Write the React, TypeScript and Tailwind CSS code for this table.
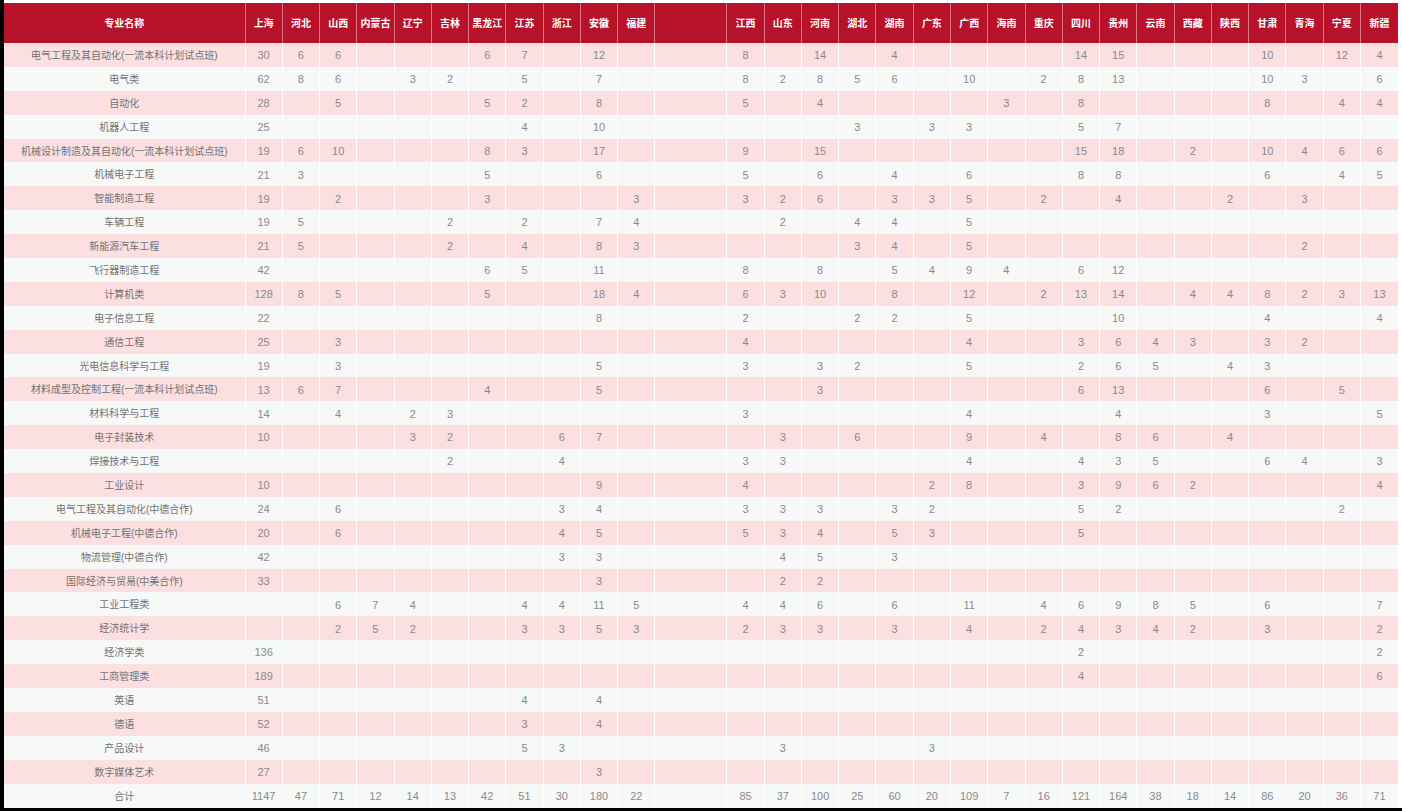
import React from "react";

const LEFT = ["上海", "河北", "山西", "内蒙古", "辽宁", "吉林", "黑龙江", "江苏", "浙江", "安徽", "福建"];
const RIGHT = ["江西", "山东", "河南", "湖北", "湖南", "广东", "广西", "海南", "重庆", "四川", "贵州", "云南", "西藏", "陕西", "甘肃", "青海", "宁夏", "新疆"];

type Major = { name: string; v: Record<string, number> };

const majors: Major[] = [
  { name: "电气工程及其自动化(一流本科计划试点班)", v: { 上海: 30, 河北: 6, 山西: 6, 黑龙江: 6, 江苏: 7, 安徽: 12, 江西: 8, 河南: 14, 湖南: 4, 四川: 14, 贵州: 15, 甘肃: 10, 宁夏: 12, 新疆: 4 } },
  { name: "电气类", v: { 上海: 62, 河北: 8, 山西: 6, 辽宁: 3, 吉林: 2, 江苏: 5, 安徽: 7, 江西: 8, 山东: 2, 河南: 8, 湖北: 5, 湖南: 6, 广西: 10, 重庆: 2, 四川: 8, 贵州: 13, 甘肃: 10, 青海: 3, 新疆: 6 } },
  { name: "自动化", v: { 上海: 28, 山西: 5, 黑龙江: 5, 江苏: 2, 安徽: 8, 江西: 5, 河南: 4, 海南: 3, 四川: 8, 甘肃: 8, 宁夏: 4, 新疆: 4 } },
  { name: "机器人工程", v: { 上海: 25, 江苏: 4, 安徽: 10, 湖北: 3, 广东: 3, 广西: 3, 四川: 5, 贵州: 7 } },
  { name: "机械设计制造及其自动化(一流本科计划试点班)", v: { 上海: 19, 河北: 6, 山西: 10, 黑龙江: 8, 江苏: 3, 安徽: 17, 江西: 9, 河南: 15, 四川: 15, 贵州: 18, 西藏: 2, 甘肃: 10, 青海: 4, 宁夏: 6, 新疆: 6 } },
  { name: "机械电子工程", v: { 上海: 21, 河北: 3, 黑龙江: 5, 安徽: 6, 江西: 5, 河南: 6, 湖南: 4, 广西: 6, 四川: 8, 贵州: 8, 甘肃: 6, 宁夏: 4, 新疆: 5 } },
  { name: "智能制造工程", v: { 上海: 19, 山西: 2, 黑龙江: 3, 福建: 3, 江西: 3, 山东: 2, 河南: 6, 湖南: 3, 广东: 3, 广西: 5, 重庆: 2, 贵州: 4, 陕西: 2, 青海: 3 } },
  { name: "车辆工程", v: { 上海: 19, 河北: 5, 吉林: 2, 江苏: 2, 安徽: 7, 福建: 4, 山东: 2, 湖北: 4, 湖南: 4, 广西: 5 } },
  { name: "新能源汽车工程", v: { 上海: 21, 河北: 5, 吉林: 2, 江苏: 4, 安徽: 8, 福建: 3, 湖北: 3, 湖南: 4, 广西: 5, 青海: 2 } },
  { name: "飞行器制造工程", v: { 上海: 42, 黑龙江: 6, 江苏: 5, 安徽: 11, 江西: 8, 河南: 8, 湖南: 5, 广东: 4, 广西: 9, 海南: 4, 四川: 6, 贵州: 12 } },
  { name: "计算机类", v: { 上海: 128, 河北: 8, 山西: 5, 黑龙江: 5, 安徽: 18, 福建: 4, 江西: 6, 山东: 3, 河南: 10, 湖南: 8, 广西: 12, 重庆: 2, 四川: 13, 贵州: 14, 西藏: 4, 陕西: 4, 甘肃: 8, 青海: 2, 宁夏: 3, 新疆: 13 } },
  { name: "电子信息工程", v: { 上海: 22, 安徽: 8, 江西: 2, 湖北: 2, 湖南: 2, 广西: 5, 贵州: 10, 甘肃: 4, 新疆: 4 } },
  { name: "通信工程", v: { 上海: 25, 山西: 3, 江西: 4, 广西: 4, 四川: 3, 贵州: 6, 云南: 4, 西藏: 3, 甘肃: 3, 青海: 2 } },
  { name: "光电信息科学与工程", v: { 上海: 19, 山西: 3, 安徽: 5, 江西: 3, 河南: 3, 湖北: 2, 广西: 5, 四川: 2, 贵州: 6, 云南: 5, 陕西: 4, 甘肃: 3 } },
  { name: "材料成型及控制工程(一流本科计划试点班)", v: { 上海: 13, 河北: 6, 山西: 7, 黑龙江: 4, 安徽: 5, 河南: 3, 四川: 6, 贵州: 13, 甘肃: 6, 宁夏: 5 } },
  { name: "材料科学与工程", v: { 上海: 14, 山西: 4, 辽宁: 2, 吉林: 3, 江西: 3, 广西: 4, 贵州: 4, 甘肃: 3, 新疆: 5 } },
  { name: "电子封装技术", v: { 上海: 10, 辽宁: 3, 吉林: 2, 浙江: 6, 安徽: 7, 山东: 3, 湖北: 6, 广西: 9, 重庆: 4, 贵州: 8, 云南: 6, 陕西: 4 } },
  { name: "焊接技术与工程", v: { 吉林: 2, 浙江: 4, 江西: 3, 山东: 3, 广西: 4, 四川: 4, 贵州: 3, 云南: 5, 甘肃: 6, 青海: 4, 新疆: 3 } },
  { name: "工业设计", v: { 上海: 10, 安徽: 9, 江西: 4, 广东: 2, 广西: 8, 四川: 3, 贵州: 9, 云南: 6, 西藏: 2, 新疆: 4 } },
  { name: "电气工程及其自动化(中德合作)", v: { 上海: 24, 山西: 6, 浙江: 3, 安徽: 4, 江西: 3, 山东: 3, 河南: 3, 湖南: 3, 广东: 2, 四川: 5, 贵州: 2, 宁夏: 2 } },
  { name: "机械电子工程(中德合作)", v: { 上海: 20, 山西: 6, 浙江: 4, 安徽: 5, 江西: 5, 山东: 3, 河南: 4, 湖南: 5, 广东: 3, 四川: 5 } },
  { name: "物流管理(中德合作)", v: { 上海: 42, 浙江: 3, 安徽: 3, 山东: 4, 河南: 5, 湖南: 3 } },
  { name: "国际经济与贸易(中美合作)", v: { 上海: 33, 安徽: 3, 山东: 2, 河南: 2 } },
  { name: "工业工程类", v: { 山西: 6, 内蒙古: 7, 辽宁: 4, 江苏: 4, 浙江: 4, 安徽: 11, 福建: 5, 江西: 4, 山东: 4, 河南: 6, 湖南: 6, 广西: 11, 重庆: 4, 四川: 6, 贵州: 9, 云南: 8, 西藏: 5, 甘肃: 6, 新疆: 7 } },
  { name: "经济统计学", v: { 山西: 2, 内蒙古: 5, 辽宁: 2, 江苏: 3, 浙江: 3, 安徽: 5, 福建: 3, 江西: 2, 山东: 3, 河南: 3, 湖南: 3, 广西: 4, 重庆: 2, 四川: 4, 贵州: 3, 云南: 4, 西藏: 2, 甘肃: 3, 新疆: 2 } },
  { name: "经济学类", v: { 上海: 136, 四川: 2, 新疆: 2 } },
  { name: "工商管理类", v: { 上海: 189, 四川: 4, 新疆: 6 } },
  { name: "英语", v: { 上海: 51, 江苏: 4, 安徽: 4 } },
  { name: "德语", v: { 上海: 52, 江苏: 3, 安徽: 4 } },
  { name: "产品设计", v: { 上海: 46, 江苏: 5, 浙江: 3, 山东: 3, 广东: 3 } },
  { name: "数字媒体艺术", v: { 上海: 27, 安徽: 3 } },
  { name: "合计", v: { 上海: 1147, 河北: 47, 山西: 71, 内蒙古: 12, 辽宁: 14, 吉林: 13, 黑龙江: 42, 江苏: 51, 浙江: 30, 安徽: 180, 福建: 22, 江西: 85, 山东: 37, 河南: 100, 湖北: 25, 湖南: 60, 广东: 20, 广西: 109, 海南: 7, 重庆: 16, 四川: 121, 贵州: 164, 云南: 38, 西藏: 18, 陕西: 14, 甘肃: 86, 青海: 20, 宁夏: 36, 新疆: 71 } },
];

const App = () => {
  return (
    <div className="w-[1402px] h-[811px] bg-black pl-[4px] pb-[3px] overflow-hidden font-['Liberation_Sans','Noto_Sans_CJK_SC',sans-serif]">
      <div className="h-full bg-white pt-[3px] overflow-hidden">
        <table className="w-[1394px] table-fixed border-collapse">
          <colgroup>
            <col className="w-[241px]" />
            {LEFT.map((p) => (
              <col key={p} />
            ))}
            <col className="w-[72px]" />
            {RIGHT.map((p) => (
              <col key={p} />
            ))}
          </colgroup>
          <thead>
            <tr className="h-[40px] bg-[#b8122a] text-white text-[10px] font-bold">
              <th className="border-r border-[#d9737f] font-bold pt-[1px]">专业名称</th>
              {LEFT.map((p) => (
                <th key={p} className="border-r border-[#d9737f] font-bold whitespace-nowrap pt-[1px]">
                  {p}
                </th>
              ))}
              <th className="border-r border-[#d9737f]"></th>
              {RIGHT.map((p) => (
                <th key={p} className="border-r border-[#d9737f] last:border-r-0 font-bold whitespace-nowrap pt-[1px]">
                  {p}
                </th>
              ))}
            </tr>
          </thead>
          <tbody>
            {majors.map((m, i) => (
              <tr key={m.name} className={`h-[23.9px] ${i % 2 === 0 ? "bg-[#fcdfe1]" : "bg-[#f7f8f8]"}`}>
                <td className="border-r border-white text-center text-[10px] text-[#727272] whitespace-nowrap pt-[1px]">
                  {m.name}
                </td>
                {LEFT.map((p) => (
                  <td key={p} className="border-r border-white text-center text-[11px] text-[#8a8a8a] pt-[1px]">
                    {m.v[p] ?? ""}
                  </td>
                ))}
                <td className="border-r border-white"></td>
                {RIGHT.map((p) => (
                  <td key={p} className="border-r border-white last:border-r-0 text-center text-[11px] text-[#8a8a8a] pt-[1px]">
                    {m.v[p] ?? ""}
                  </td>
                ))}
              </tr>
            ))}
          </tbody>
        </table>
      </div>
    </div>
  );
};

export default App;
